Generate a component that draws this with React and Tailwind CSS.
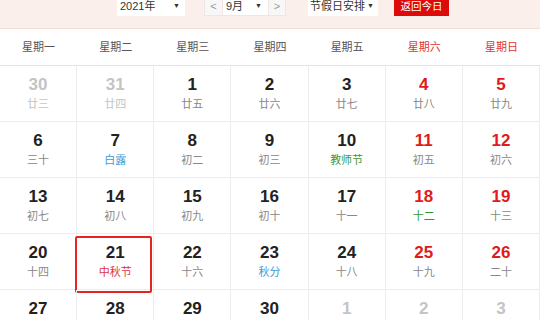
import React from "react";

const weekdays = ["星期一", "星期二", "星期三", "星期四", "星期五", "星期六", "星期日"];

// other = 非本月, red = 周末
const days = [
  { d: "30", l: "廿三", other: true },
  { d: "31", l: "廿四", other: true },
  { d: "1", l: "廿五" },
  { d: "2", l: "廿六" },
  { d: "3", l: "廿七" },
  { d: "4", l: "廿八", red: true },
  { d: "5", l: "廿九", red: true },
  { d: "6", l: "三十" },
  { d: "7", l: "白露", lc: "text-[#3d9ad6]" },
  { d: "8", l: "初二" },
  { d: "9", l: "初三" },
  { d: "10", l: "教师节", lc: "text-[#3a9a3a]" },
  { d: "11", l: "初五", red: true },
  { d: "12", l: "初六", red: true },
  { d: "13", l: "初七" },
  { d: "14", l: "初八" },
  { d: "15", l: "初九" },
  { d: "16", l: "初十" },
  { d: "17", l: "十一" },
  { d: "18", l: "十二", red: true, lc: "text-[#2e9a2e]" },
  { d: "19", l: "十三", red: true },
  { d: "20", l: "十四" },
  { d: "21", l: "中秋节", lc: "text-[#e0333a]", active: true },
  { d: "22", l: "十六" },
  { d: "23", l: "秋分", lc: "text-[#3d9ad6]" },
  { d: "24", l: "十八" },
  { d: "25", l: "十九", red: true },
  { d: "26", l: "二十", red: true },
  { d: "27", l: "廿一" },
  { d: "28", l: "廿二" },
  { d: "29", l: "廿三" },
  { d: "30", l: "廿四" },
  { d: "1", l: "廿五", other: true },
  { d: "2", l: "廿六", other: true },
  { d: "3", l: "廿七", other: true },
];

function DayCell({ day }) {
  let numColor = "text-[#222]";
  if (day.other) numColor = "text-[#c4c4c4]";
  else if (day.red) numColor = "text-[#e01b1b]";
  let lunarColor = day.lc || "text-[#888]";
  if (day.other) lunarColor = "text-[#c4c4c4]";

  return (
    <div className="relative h-[56px] border-r border-b border-[#ececec] flex flex-col items-center pt-[9px]">
      <div className={`text-[17px] leading-[20px] font-bold ${numColor}`}>{day.d}</div>
      <div className={`mt-[1px] text-[11px] leading-[16px] ${lunarColor}`}>{day.l}</div>
      {day.active && (
        <div className="absolute left-[-2px] top-[2px] w-[77px] h-[57px] border-2 border-[#e52424] rounded-[2px]" />
      )}
    </div>
  );
}

export default function App() {
  return (
    <div
      className="w-[540px] h-[320px] overflow-hidden bg-white"
      style={{ fontFamily: '"Liberation Sans", "Noto Sans CJK SC", sans-serif' }}
    >
      {/* 顶部工具条 */}
      <div className="h-[29px] bg-[#fbefec] border-b border-[#f3dfd9] flex items-start text-[11px] text-[#333] whitespace-nowrap">
        <div className="ml-[117px] mt-[-6px] w-[68px] h-[22px] pt-[3px] bg-white flex items-center justify-between pl-[3px] pr-[5px]">
          <span>2021年</span>
          <span className="text-[7px]">▼</span>
        </div>

        <div className="ml-[19px] mt-[-6px] h-[22px] flex border border-[#efe6e4] bg-white">
          <div className="w-[18px] pt-[3px] bg-[#f7f7f7] flex items-center justify-center text-[#999] border-r border-[#efe6e4]">&lt;</div>
          <div className="w-[45px] pt-[3px] flex items-center justify-between pl-[3px] pr-[6px]">
            <span>9月</span>
            <span className="text-[7px]">▼</span>
          </div>
          <div className="w-[17px] pt-[3px] bg-[#f7f7f7] flex items-center justify-center text-[#999] border-l border-[#efe6e4]">&gt;</div>
        </div>

        <div className="ml-[22px] mt-[-6px] w-[70px] h-[22px] pt-[3px] bg-white flex items-center justify-between pl-[2px] pr-[4px]">
          <span>节假日安排</span>
          <span className="text-[7px]">▼</span>
        </div>

        <div className="ml-[16px] mt-[-6px] w-[55px] h-[22px] pt-[3px] bg-[#dc0a0a] text-white text-[10.5px] flex items-center justify-center">
          返回今日
        </div>
      </div>

      {/* 星期 */}
      <div className="grid grid-cols-7 h-[37px] border-b border-[#f2dcdc]">
        {weekdays.map((w, i) => (
          <div
            key={w}
            className={`flex items-center justify-center text-[11px] ${i >= 5 ? "text-[#e03535]" : "text-[#555]"}`}
          >
            {w}
          </div>
        ))}
      </div>

      {/* 日期 */}
      <div className="grid grid-cols-7">
        {days.map((day, i) => (
          <DayCell key={i} day={day} />
        ))}
      </div>
    </div>
  );
}
